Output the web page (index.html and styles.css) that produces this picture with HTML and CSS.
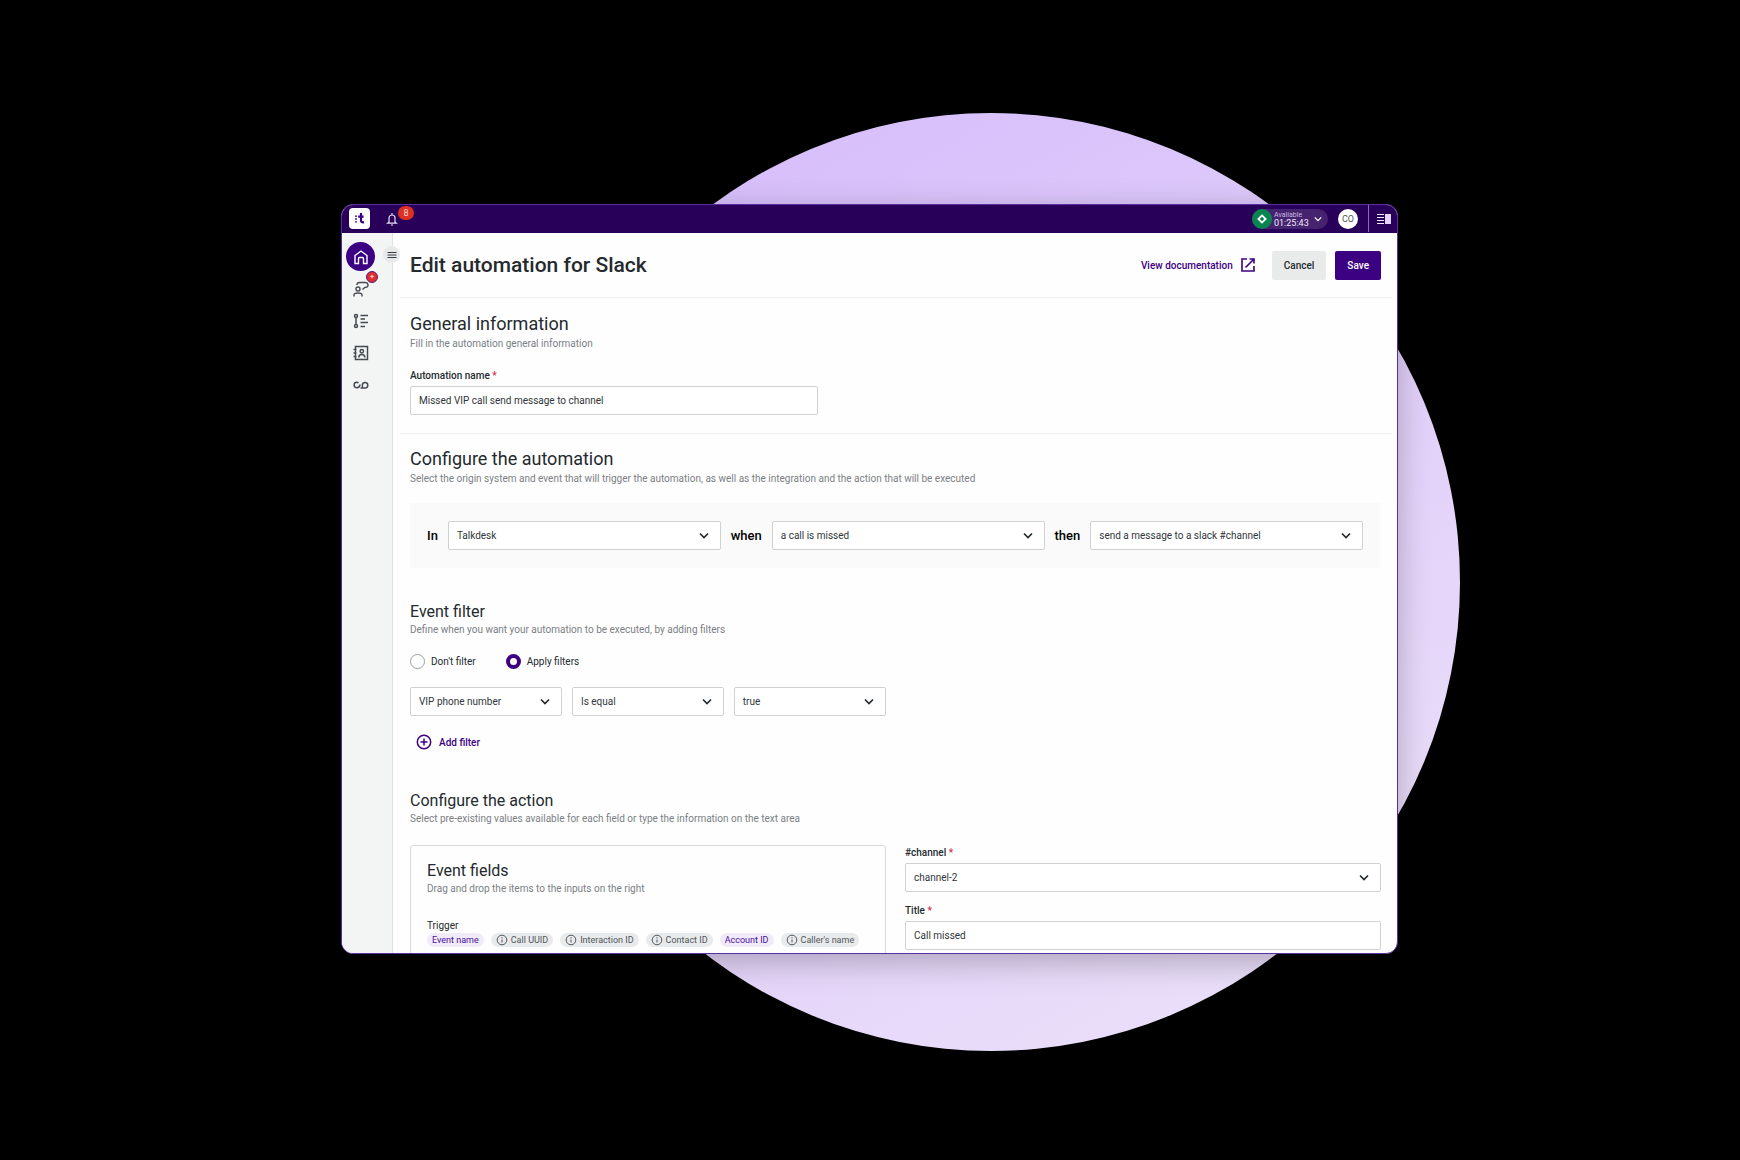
FILE: index.html
```html
<!DOCTYPE html>
<html lang="en">
<head>
    <meta charset="UTF-8">
    <meta name="viewport" content="width=device-width, initial-scale=1.0">
    <title>Edit automation for Slack</title>
    <link rel="stylesheet" href="styles.css">
</head>
<body>
    <div class="stage">
        <div class="circle"></div>
        <div class="window">
            <header class="topbar">
                <a class="logo" href="#" aria-label="Home">
                    <svg viewBox="0 0 21 21" width="21" height="21">
                        <g fill="#3c0083">
                            <circle cx="7" cy="8.2" r="0.9"/><circle cx="7" cy="11" r="0.9"/><circle cx="7" cy="13.8" r="0.9"/>
                        </g>
                        <path d="M12 5v7.400q0 2.400 3 1.800M9.200 8.700h5.400" fill="none" stroke="#3c0083" stroke-width="2.200"/>
                    </svg>
                </a>
                <button class="bell" type="button" aria-label="Notifications">
                    <svg viewBox="0 0 12 14" width="12" height="14" fill="none" stroke="#e6dcf5" stroke-width="1.2">
                        <path d="M3 10V6a3 3 0 0 1 6 0v4l1.300 1.200H1.700zM6 3V1M5 13h2"/>
                    </svg>
                    <span class="bell-count">8</span>
                </button>
                <div class="topbar-right">
                    <button class="status" type="button">
                        <span class="status-dot">
                            <svg viewBox="0 0 20 20" width="20" height="20"><path d="M10 6.400l3.600 3.600-3.600 3.600L6.400 10z" fill="none" stroke="#fff" stroke-width="1.800"/></svg>
                        </span>
                        <span class="status-text">
                            <span class="status-name">Available</span>
                            <span class="status-time">01:25:43</span>
                        </span>
                        <svg viewBox="0 0 10 6" width="8" height="6"><path d="M1 1l4 4 4-4" fill="none" stroke="#fff" stroke-width="1.6"/></svg>
                    </button>
                    <span class="avatar">CO</span>
                    <button class="panel-toggle" type="button" aria-label="Toggle side panel">
                        <svg viewBox="0 0 14 12" width="14" height="12">
                            <path d="M0 1.500h7M0 4.500h7M0 7.500h7M0 10.500h7" stroke="#efe8fa" stroke-width="1.2"/>
                            <path d="M8 1h6v10H8z" fill="#e4d3fb"/>
                        </svg>
                    </button>
                </div>
            </header>

            <div class="body">
                <nav class="sidebar">
                    <a class="nav-item active" href="#" aria-label="Home">
                        <svg viewBox="0 0 16 16" width="16" height="16" fill="none" stroke="#fff" stroke-width="1.4">
                            <path d="M2 6.500L8 2l6 4.500V14.500h-3.500V9.500q0-1-1-1h-3q-1 0-1 1v5H2z"/>
                        </svg>
                    </a>
                    <a class="nav-item" href="#" aria-label="Conversations">
                        <svg viewBox="0 0 16 16" width="16" height="16" fill="none" stroke="#444c52" stroke-width="1.4">
                            <circle cx="5" cy="8" r="2"/>
                            <path d="M1 15.500v-1.500q0-2 4-2t4 2v1.500M3.800 4q.4-2.500 2.700-2.500h6a2.500 2.500 0 0 1 1.500 4.500q-2.500 0-4.500 2.500"/>
                        </svg>
                        <span class="nav-badge">+</span>
                    </a>
                    <a class="nav-item" href="#" aria-label="Activities">
                        <svg viewBox="0 0 16 16" width="16" height="16" fill="none" stroke="#444c52" stroke-width="1.5">
                            <circle cx="3" cy="3" r="1.500"/><circle cx="3" cy="13" r="1.500"/>
                            <path d="M3 4.500v7M7.500 2.500H15M7.500 6h4.500M7.500 9.500H15M7.500 13.500h4.500"/>
                        </svg>
                    </a>
                    <a class="nav-item" href="#" aria-label="Contacts">
                        <svg viewBox="0 0 16 16" width="16" height="16" fill="none" stroke="#444c52" stroke-width="1.5">
                            <path d="M2.500 1.500h12v13h-12zM.5 4.500h3M.5 8h3M.5 11.500h3"/>
                            <circle cx="8.800" cy="6.300" r="1.700"/>
                            <path d="M5.800 12.500q0-3 3-3t3 3"/>
                        </svg>
                    </a>
                    <a class="nav-item" href="#" aria-label="Voicemail">
                        <svg viewBox="0 0 16 16" width="16" height="16" fill="none" stroke="#444c52" stroke-width="1.5">
                            <path d="M5.500 6q-.7-.7-1.700-.7a2.700 2.700 0 0 0 0 5.400q3 0 3.200-3.200M9.400 11V8a2.700 2.700 0 1 1 2.800 2.900H7.500"/>
                        </svg>
                    </a>
                    <button class="menu-toggle" type="button" aria-label="Expand menu">
                        <svg viewBox="0 0 10 8" width="10" height="8"><path d="M0.500 1.500h9M0.500 4h9M0.500 6.500h9" stroke="#333a40" stroke-width="1"/></svg>
                    </button>
                </nav>

                <main class="content">
                    <div class="page-header">
                        <h1>Edit automation for Slack</h1>
                        <div class="actions">
                            <a class="doc-link" href="#">View documentation
                                <svg viewBox="0 0 14 14" width="14" height="14" fill="none" stroke="#3c0083" stroke-width="1.600">
                                    <path d="M6 1H1v12h12V8M8.500 1H13v4.500M13 1L4.500 9.500"/>
                                </svg>
                            </a>
                            <button class="btn btn-secondary" type="button">Cancel</button>
                            <button class="btn btn-primary" type="button">Save</button>
                        </div>
                    </div>

                    <section class="general">
                        <h2>General information</h2>
                        <p class="hint">Fill in the automation general information</p>
                        <div class="field half">
                            <label for="name">Automation name <span class="required">*</span></label>
                            <input class="control" id="name" type="text" value="Missed VIP call send message to channel">
                        </div>
                    </section>

                    <section class="configure">
                        <h2>Configure the automation</h2>
                        <p class="hint">Select the origin system and event that will trigger the automation, as well as the integration and the action that will be executed</p>
                        <div class="rule">
                            <label for="system">In</label>
                            <select class="control" id="system"><option>Talkdesk</option></select>
                            <label for="event">when</label>
                            <select class="control" id="event"><option>a call is missed</option></select>
                            <label for="action">then</label>
                            <select class="control" id="action"><option>send a message to a slack #channel</option></select>
                        </div>
                    </section>

                    <section class="filters">
                        <h3>Event filter</h3>
                        <p class="hint">Define when you want your automation to be executed, by adding filters</p>
                        <div class="radios">
                            <label><input type="radio" name="filter"> Don't filter</label>
                            <label><input type="radio" name="filter" checked> Apply filters</label>
                        </div>
                        <div class="filter-row">
                            <select class="control" aria-label="Field"><option>VIP phone number</option></select>
                            <select class="control" aria-label="Operator"><option>Is equal</option></select>
                            <select class="control" aria-label="Value"><option>true</option></select>
                        </div>
                        <button class="add-filter" type="button">
                            <svg viewBox="0 0 16 16" width="16" height="16" fill="none" stroke="#3c0083" stroke-width="1.500">
                                <circle cx="8" cy="8" r="6.700"/><path d="M8 4.500v7M4.500 8h7"/>
                            </svg>
                            Add filter
                        </button>
                    </section>

                    <section class="action">
                        <h3>Configure the action</h3>
                        <p class="hint">Select pre-existing values available for each field or type the information on the text area</p>
                        <div class="columns">
                            <div class="event-fields">
                                <h3>Event fields</h3>
                                <p class="hint">Drag and drop the items to the inputs on the right</p>
                                <h4>Trigger</h4>
                                <div class="chips">
                                    <span class="chip chip-purple">Event name</span>
                                    <span class="chip"><svg class="info" viewBox="0 0 12 12"><circle cx="6" cy="6" r="4.800"/><path d="M6 5.500v3M6 3.200v1.200"/></svg>Call UUID</span>
                                    <span class="chip"><svg class="info" viewBox="0 0 12 12"><circle cx="6" cy="6" r="4.800"/><path d="M6 5.500v3M6 3.200v1.200"/></svg>Interaction ID</span>
                                    <span class="chip"><svg class="info" viewBox="0 0 12 12"><circle cx="6" cy="6" r="4.800"/><path d="M6 5.500v3M6 3.200v1.200"/></svg>Contact ID</span>
                                    <span class="chip chip-purple">Account ID</span>
                                    <span class="chip"><svg class="info" viewBox="0 0 12 12"><circle cx="6" cy="6" r="4.800"/><path d="M6 5.500v3M6 3.200v1.200"/></svg>Caller's name</span>
                                </div>
                            </div>
                            <div class="inputs">
                                <div class="field">
                                    <label for="channel">#channel <span class="required">*</span></label>
                                    <select class="control" id="channel"><option>channel-2</option></select>
                                </div>
                                <div class="field">
                                    <label for="title">Title <span class="required">*</span></label>
                                    <input class="control" id="title" type="text" value="Call missed">
                                </div>
                            </div>
                        </div>
                    </section>
                </main>
            </div>
        </div>
    </div>
</body>
</html>
```
FILE: styles.css
```css
* {
    box-sizing: border-box;
}

body {
    margin: 0;
    background-color: #000;
    color: #242a2e;
    font-family: Roboto, sans-serif;
    font-size: 10px;
}

h1, h2, h3, h4, p {
    margin: 0;
}

button {
    font-family: inherit;
    border: none;
    padding: 0;
    background: none;
    cursor: pointer;
}

a {
    text-decoration: none;
}

svg {
    flex-shrink: 0;
}

.stage {
    position: relative;
    display: flex;
    height: 100vh;
    padding: 204px 342px 206px 341px;
    overflow: hidden;
}

.circle {
    position: absolute;
    top: 50%;
    left: 50%;
    width: 938px;
    height: 938px;
    margin: -467px 0 0 -348px;
    border-radius: 50%;
    background: linear-gradient(150deg, #d7befb 10%, #eadff9 90%);
}

.window {
    position: relative;
    display: flex;
    flex-direction: column;
    flex: 1;
    min-width: 0;
    border: 1px solid #5b2ea6;
    border-radius: 12px;
    background-color: #fefefe;
    overflow: hidden;
    box-shadow: 0 8px 32px rgba(0, 0, 0, 0.25);
}

/* top bar */
.topbar {
    display: flex;
    align-items: center;
    flex-shrink: 0;
    height: 28px;
    padding: 0 0 1px 7px;
    background-color: #290059;
}

.logo {
    display: flex;
    border-radius: 4px;
    background-color: #fff;
}

.bell {
    position: relative;
    display: flex;
    margin-left: 16px;
}

.bell-count {
    position: absolute;
    top: -6px;
    left: 12px;
    width: 16px;
    border-radius: 8px;
    background-color: #dc3023;
    color: #ffd9d4;
    font-size: 9px;
    line-height: 14px;
    text-align: center;
}

.topbar-right {
    display: flex;
    align-items: center;
    height: 100%;
    margin-left: auto;
}

.status {
    display: flex;
    align-items: center;
    height: 20px;
    padding-right: 6px;
    border-radius: 10px;
    background-color: #46236f;
    color: #efe8fa;
}

.status-dot {
    display: flex;
    border-radius: 50%;
    background-color: #0b8550;
}

.status-text {
    display: flex;
    flex-direction: column;
    width: 42px;
    padding-left: 2px;
    font-size: 9px;
    line-height: 8px;
    text-align: left;
}

.status-name {
    color: #c9b8e0;
    font-size: 7px;
}

.avatar {
    width: 20px;
    margin: 0 10px;
    border-radius: 50%;
    background-color: #fff;
    color: #4b5a50;
    font-size: 9px;
    line-height: 20px;
    text-align: center;
}

.panel-toggle {
    display: flex;
    align-items: center;
    height: 100%;
    padding: 0 6px 0 8px;
    border-left: 1px solid #8a6bb5;
}

/* sidebar */
.body {
    display: flex;
    flex: 1;
    min-height: 0;
}

.sidebar {
    position: relative;
    display: flex;
    flex-direction: column;
    gap: 3px;
    flex-shrink: 0;
    width: 51px;
    padding: 9px 0 0 4px;
    border-right: 1px solid #dfe1e3;
    background-color: #f3f4f4;
}

.nav-item {
    position: relative;
    display: flex;
    align-items: center;
    justify-content: center;
    width: 29px;
    height: 29px;
    border-radius: 50%;
}

.nav-item.active {
    background-color: #3c0083;
}

.nav-badge {
    position: absolute;
    top: -3px;
    left: 20px;
    width: 12px;
    height: 12px;
    border: 1px solid #5b1a7a;
    border-radius: 50%;
    background-color: #dc3030;
    color: #fff;
    font-size: 8px;
    line-height: 10px;
    text-align: center;
}

.menu-toggle {
    position: absolute;
    top: 13px;
    right: -8px;
    display: flex;
    align-items: center;
    justify-content: center;
    width: 17px;
    height: 17px;
    border-radius: 50%;
    background-color: #e8e9ea;
}

/* content */
.content {
    flex: 1;
    min-width: 0;
    padding: 0 5px 0 7px;
    overflow: hidden;
}

.page-header {
    display: flex;
    align-items: center;
    justify-content: space-between;
    height: 65px;
    padding: 0 11px 0 10px;
    border-bottom: 1px solid #f0f1f1;
}

h1 {
    font-size: 21px;
    font-weight: 500;
    line-height: 24px;
}

h2 {
    font-size: 18px;
    font-weight: 400;
    line-height: 22px;
}

h3 {
    font-size: 16px;
    font-weight: 400;
    line-height: 18px;
}

h4 {
    margin-top: 23px;
    font-size: 10px;
    font-weight: 400;
    line-height: 14px;
}

.hint {
    margin-top: 2px;
    color: #7b8084;
    font-size: 10px;
    line-height: 14px;
}

.actions {
    display: flex;
    align-items: center;
    gap: 9px;
}

.doc-link {
    display: flex;
    align-items: center;
    gap: 8px;
    margin-right: 8px;
    color: #3c0083;
    font-weight: 500;
}

.btn {
    height: 29px;
    padding: 0 12px;
    border-radius: 2px;
    font-size: 10px;
    font-weight: 500;
}

.btn-secondary {
    background-color: #e9eaea;
    color: #242a2e;
}

.btn-primary {
    background-color: #3c0083;
    color: #fff;
}

section {
    padding: 0 11px 0 10px;
}

.general {
    padding-top: 15px;
    padding-bottom: 18px;
    border-bottom: 1px solid #f0f1f1;
}

.configure {
    padding-top: 14px;
}

.field label {
    display: block;
    font-weight: 500;
    line-height: 14px;
    margin-bottom: 3px;
}

.required {
    color: #d3304f;
}

.control {
    display: block;
    width: 100%;
    height: 29px;
    padding: 0 8px;
    border: 1px solid #cfd1d3;
    border-radius: 2px;
    background-color: #fff;
    color: #30363a;
    font-family: inherit;
    font-size: 10px;
}

select.control {
    appearance: none;
    background-image: url("data:image/svg+xml,%3Csvg xmlns='http://www.w3.org/2000/svg' viewBox='0 0 10 7'%3E%3Cpath d='M1 1.500l4 4 4-4' fill='none' stroke='%23242a2e' stroke-width='1.700'/%3E%3C/svg%3E");
    background-repeat: no-repeat;
    background-position: right 11px center;
    background-size: 10px 7px;
}

.general .field {
    margin-top: 18px;
}

.half {
    width: 42%;
}

.rule {
    display: flex;
    align-items: center;
    gap: 10px;
    margin-top: 17px;
    padding: 18px 18px 18px 17px;
    background-color: #fafafa;
}

.rule label {
    color: #000;
    font-size: 13px;
    font-weight: 500;
}

.rule .control {
    flex: 1;
    min-width: 0;
}

.filters {
    padding-top: 35px;
}

.radios {
    display: flex;
    gap: 30px;
    margin-top: 17px;
}

.radios label {
    display: flex;
    align-items: center;
    gap: 6px;
}

.radios input {
    appearance: none;
    width: 15px;
    height: 15px;
    margin: 0;
    border: 1px solid #9a9fa3;
    border-radius: 50%;
    background-color: #fff;
}

.radios input:checked {
    border: 4px solid #3c0083;
}

.filter-row {
    display: grid;
    grid-template-columns: repeat(3, 1fr);
    gap: 10px;
    width: 49%;
    margin-top: 18px;
}

.add-filter {
    display: flex;
    align-items: center;
    gap: 7px;
    margin-top: 18px;
    margin-left: 6px;
    color: #3c0083;
    font-size: 10px;
    font-weight: 500;
}

.action {
    padding-top: 42px;
}

.columns {
    display: grid;
    grid-template-columns: 1fr 1fr;
    gap: 19px;
    margin-top: 19px;
}

.event-fields {
    height: 240px;
    padding: 16px;
    border: 1px solid #d8dadc;
    border-radius: 3px;
}

.chips {
    display: flex;
    gap: 7px;
}

.chip {
    display: flex;
    align-items: center;
    gap: 3px;
    height: 14px;
    padding: 0 5px;
    border-radius: 7px;
    background-color: #e9eaeb;
    color: #50575c;
    font-size: 9px;
    white-space: nowrap;
}

.chip-purple {
    background-color: #f1ebf9;
    color: #4a0f9c;
}

.info {
    width: 12px;
    height: 12px;
    fill: none;
    stroke: #50575c;
}

.inputs {
    padding-top: 1px;
}

.inputs .field {
    margin-bottom: 12px;
}
```
